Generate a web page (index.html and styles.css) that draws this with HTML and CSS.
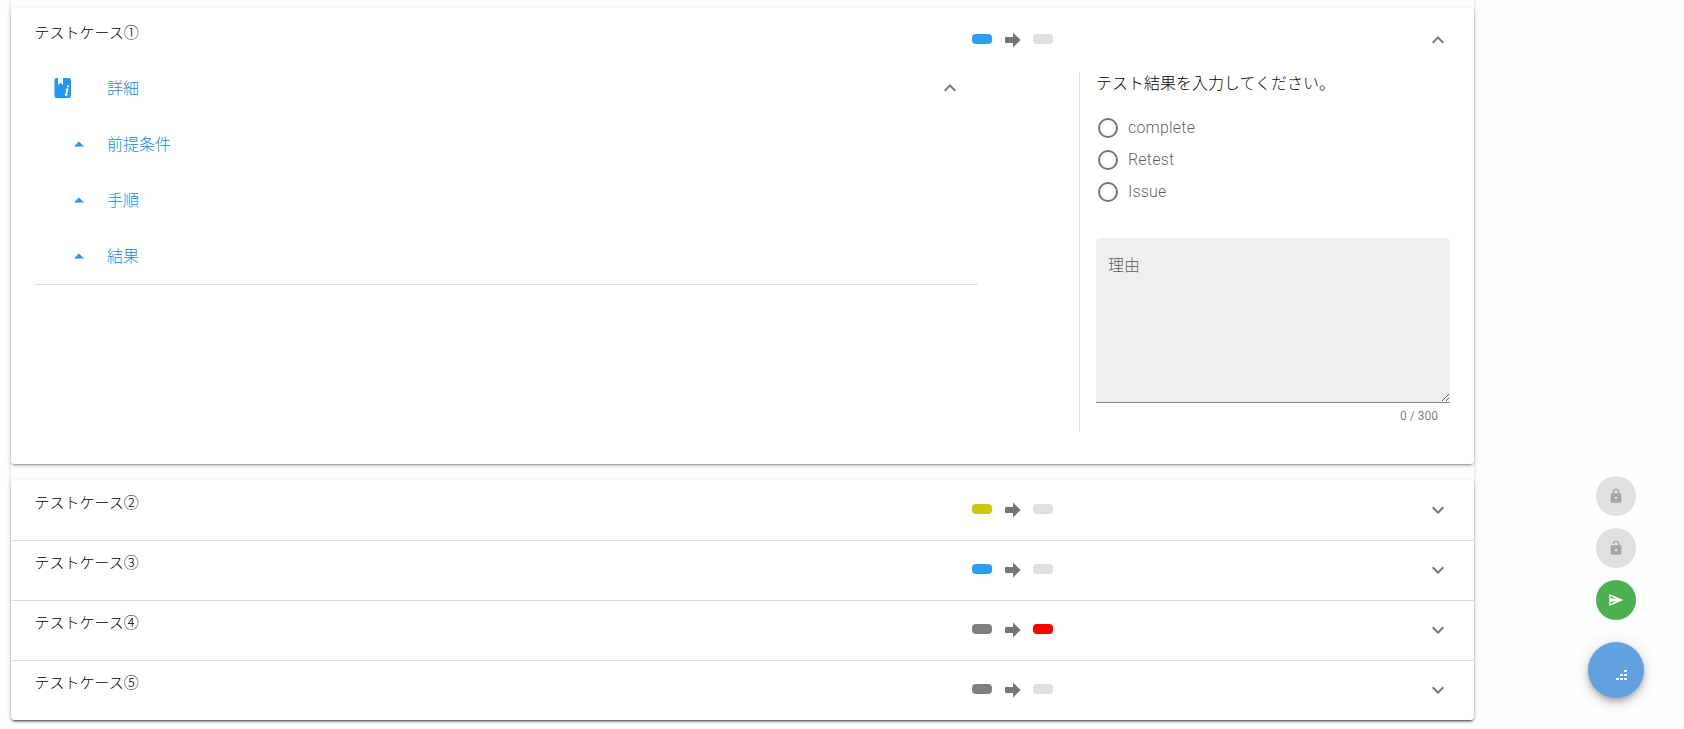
FILE: index.html
```html
<!DOCTYPE html>
<html lang="ja">
<head>
<meta charset="utf-8">
<title>テストケース</title>
<link rel="stylesheet" href="styles.css">
</head>
<body>
<svg width="0" height="0" class="sprite">
  <symbol id="arrow" viewBox="0 0 16 16"><path d="M0 5h8V.4L15.600 8 8 15.400V11H0z"/></symbol>
  <symbol id="down" viewBox="0 0 24 24"><path d="M7.410 8.580 12 13.170l4.590-4.590L18 10l-6 6-6-6z"/></symbol>
  <symbol id="up" viewBox="0 0 24 24"><path d="M7.410 15.410 12 10.830l4.590 4.580L18 14l-6-6-6 6z"/></symbol>
  <symbol id="tri" viewBox="0 0 24 24"><path d="m7 14.500 5-5 5 5z"/></symbol>
</svg>
<main class="page">
  <section class="panels">
    <article class="panel open">
      <header class="row"><h2>テストケース①</h2>
        <div class="status"><i class="chip blue"></i><svg class="arrow"><use href="#arrow"/></svg><i class="chip"></i></div>
        <svg class="toggle"><use href="#up"/></svg></header>
      <div class="body">
        <ul class="tree">
          <li class="root"><svg class="book" viewBox="0 0 24 24"><path fill-rule="evenodd" d="M5.500 2H7v7l2.600-2.200L12 9V2h6a2 2 0 0 1 2 2v16a2 2 0 0 1-2 2H5.500a2 2 0 0 1-2-2V4a2 2 0 0 1 2-2z"/><g class="info"><circle cx="17" cy="10.300" r="1.100"/><path d="M14.300 13.200c1.100-.8 2.200-1.200 2.800-1 .5.200.3 1 .1 1.700l-1.300 4.600c0 .4.500.2 1.300-.3l.2.400c-1 1.100-2.300 1.700-3 1.400-.6-.2-.5-.9-.2-1.800l1.200-4.300c.1-.6-.4-.4-.9-.1z"/></g></svg><span>詳細</span><svg class="fold"><use href="#up"/></svg></li>
          <li><svg class="tri"><use href="#tri"/></svg><span>前提条件</span></li>
          <li><svg class="tri"><use href="#tri"/></svg><span>手順</span></li>
          <li><svg class="tri"><use href="#tri"/></svg><span>結果</span></li>
        </ul>
        <form class="result">
          <p class="prompt">テスト結果を入力してください。</p>
          <label><input type="radio" name="result">complete</label>
          <label><input type="radio" name="result">Retest</label>
          <label><input type="radio" name="result">Issue</label>
          <textarea placeholder="理由"></textarea>
          <div class="counter">0 / 300</div>
        </form>
      </div>
    </article>
    <div class="group">
      <article class="row"><h2>テストケース②</h2><div class="status"><i class="chip yellow"></i><svg class="arrow"><use href="#arrow"/></svg><i class="chip"></i></div><svg class="toggle"><use href="#down"/></svg></article>
      <article class="row"><h2>テストケース③</h2><div class="status"><i class="chip blue"></i><svg class="arrow"><use href="#arrow"/></svg><i class="chip"></i></div><svg class="toggle"><use href="#down"/></svg></article>
      <article class="row"><h2>テストケース④</h2><div class="status"><i class="chip gray"></i><svg class="arrow"><use href="#arrow"/></svg><i class="chip red"></i></div><svg class="toggle"><use href="#down"/></svg></article>
      <article class="row"><h2>テストケース⑤</h2><div class="status"><i class="chip gray"></i><svg class="arrow"><use href="#arrow"/></svg><i class="chip"></i></div><svg class="toggle"><use href="#down"/></svg></article>
    </div>
  </section>
  <aside class="actions">
    <button class="fab" disabled><svg viewBox="0 0 24 24"><path d="M12 17a2 2 0 0 0 2-2c0-1.110-.9-2-2-2a2 2 0 0 0-2 2 2 2 0 0 0 2 2m6-9a2 2 0 0 1 2 2v10a2 2 0 0 1-2 2H6a2 2 0 0 1-2-2V10c0-1.110.9-2 2-2h1V6a5 5 0 0 1 10 0v2zm-6-5a3 3 0 0 0-3 3v2h6V6a3 3 0 0 0-3-3"/></svg></button>
    <button class="fab" disabled><svg viewBox="0 0 24 24"><path fill-rule="evenodd" d="M18 8h-1V6A5 5 0 0 0 7 6h2a3 3 0 0 1 6 0v2H6a2 2 0 0 0-2 2v10a2 2 0 0 0 2 2h12a2 2 0 0 0 2-2V10a2 2 0 0 0-2-2m-6 5a2 2 0 1 1 0 4 2 2 0 0 1 0-4"/></svg></button>
    <button class="fab send"><svg viewBox="0 0 24 24"><path fill-rule="evenodd" d="M2 3v18l21-9zm2 3 8.500 4L4 9zm0 9 8.500-1L4 18z"/></svg></button>
    <button class="fab main"><svg viewBox="0 0 12 10"><path d="M9 0h3v2H9zM5 4h3v2H5zM9 4h3v2H9zM1 8h3v2H1zM5 8h3v2H5zM9 8h3v2H9z"/></svg></button>
  </aside>
</main>
</body>
</html>
```
FILE: styles.css
```css
* { box-sizing: border-box; }
body { margin: 0; height: 729px; overflow: hidden; background: #fefefe; color: #000; font: 16px/24px Roboto, "Noto Sans CJK JP", sans-serif; }
.sprite { position: absolute; }
.page { display: flex; justify-content: space-between; height: 729px; padding: 0 40px 0 11px; }
.panels { width: 1463px; height: 730px; margin-top: -10px; padding-top: 18px; border-radius: 4px; box-shadow: 0 3px 1px -2px rgba(0,0,0,.2), 0 2px 2px rgba(0,0,0,.14), 0 1px 5px rgba(0,0,0,.12); }
.panel, .group { background: #fff; border-radius: 4px; box-shadow: 0 3px 1px -2px rgba(0,0,0,.2), 0 2px 2px rgba(0,0,0,.14), 0 1px 5px rgba(0,0,0,.12); }
.panel { height: 456px; margin-bottom: 16px; }
.row { display: grid; grid-template-columns: 937px 1fr 24px; height: 60px; padding: 0 24px; }
.group .row + .row { border-top: 1px solid #dcdcdc; }
h2 { margin: 0; font-size: 15px; font-weight: 300; line-height: 20px; padding-top: 15px; text-indent: -.5px; }
.group h2 { padding-top: 13px; }
.group .row + .row h2 { padding-top: 12px; }
.status { display: flex; padding-top: 26px; }
.group .status { padding-top: 24px; }
.group .row + .row .status { padding-top: 23px; }
.chip { width: 20px; height: 10px; border-radius: 4px; background: #e0e0e0; }
.chip.blue { background: #2a9ff1; }
.chip.yellow { background: #ccc80a; }
.chip.gray { background: #808080; }
.chip.red { background: #f00; }
.arrow { width: 16px; height: 16px; margin: -2px 12px 0 13px; fill: #757575; }
.toggle { width: 24px; height: 24px; margin-top: 20px; fill: #757575; }
.group .toggle { margin-top: 18px; }
.group .row + .row .toggle { margin-top: 17px; }
.body { display: flex; justify-content: space-between; padding: 0 24px; margin-top: -8px; }
.tree { list-style: none; width: 943px; height: 225px; margin: 0; padding: 0; border-bottom: 1px solid #dcdcdc; color: #0f8af0; }
.tree li { display: flex; align-items: center; height: 56px; padding-left: 32px; }
.tree li.root { padding: 0 16px; }
.tree svg { width: 24px; height: 24px; fill: #2196f3; }
.tree li .tri { margin-right: 16px; }
.tree li span { font-weight: 300; padding-top: 1px; }
.tree .book { margin-right: 32px; }
.tree .info { fill: #fff; }
.tree li .fold { margin-left: auto; fill: #757575; }
.result { width: 371px; height: 360px; margin-top: 12px; padding: 0 0 0 16px; border-left: 1px solid #e0e0e0; }
.prompt { margin: 0 0 29px; height: 11px; line-height: 24px; font-weight: 300; }
.result label { display: flex; align-items: center; gap: 10px; height: 32px; padding-left: 2px; color: rgba(0,0,0,.65); font-weight: 300; letter-spacing: .2px; }
.result input { appearance: none; width: 20px; height: 20px; margin: 0; border: 2px solid #757575; border-radius: 50%; }
.result textarea { display: block; width: 354px; height: 165px; margin-top: 30px; padding: 16px 12px; border: 0; border-bottom: 1px solid #8a8a8a; border-radius: 4px 4px 0 0; background: #efefef; font: 300 16px/24px Roboto, "Noto Sans CJK JP", sans-serif; resize: vertical; }
.result textarea::placeholder { color: rgba(0,0,0,.66); }
.counter { padding: 7px 12px 0; text-align: right; font-size: 12px; line-height: 12px; color: rgba(0,0,0,.54); }
.actions { display: flex; flex-direction: column; align-items: center; gap: 12px; width: 56px; padding-top: 476px; }
.fab { display: grid; place-items: center; width: 40px; height: 40px; padding: 0; border: 0; border-radius: 50%; background: #e0e0e0; flex: none; }
.fab svg { width: 16px; height: 16px; fill: #a6a6a6; }
.fab.send { background: #4caf50; }
.fab.send svg { fill: #fff; }
.fab.main { width: 56px; height: 56px; margin-top: 10px; background: #62a1e0; box-shadow: 0 3px 5px -1px rgba(0,0,0,.2), 0 6px 10px rgba(0,0,0,.14), 0 1px 18px rgba(0,0,0,.12); }
.fab.main svg { width: 12px; height: 10px; fill: #fff; margin: 10px 0 0 10px; }
```
